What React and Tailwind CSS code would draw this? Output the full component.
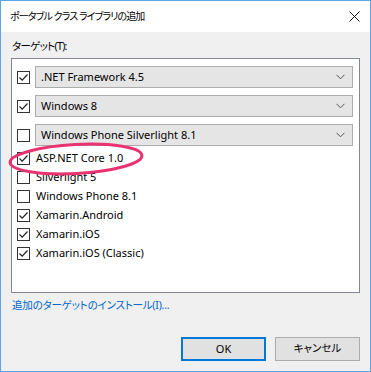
import React from 'react';

const font = { fontFamily: '"Noto Sans", "Noto Sans CJK JP", sans-serif' };

// small check box, checked or not
function Box({ checked }) {
    return (
        <div className="w-[13px] h-[13px] border border-[#333333] bg-white flex items-center justify-center shrink-0">
            {checked && (
                <svg width="11" height="11" viewBox="0 0 11 11">
                    <path d="M1.5 5.5 L4.2 8.2 L9.5 2.5" fill="none" stroke="#222" strokeWidth="1.2" />
                </svg>
            )}
        </div>
    );
}

function DropRow({ checked, label }) {
    return (
        <div className="flex items-center h-[22px] mb-[7px]">
            <div className="ml-[5px] mr-[5px]"><Box checked={checked} /></div>
            <div className="flex-1 h-[22px] mr-[6px] bg-[#e5e5e5] border border-[#acacac] flex items-center justify-between pl-[5px] pr-[7px] text-[11px] text-black">
                <span>{label}</span>
                <svg width="9" height="6" viewBox="0 0 9 6">
                    <path d="M0.5 0.8 L4.5 4.8 L8.5 0.8" fill="none" stroke="#555" strokeWidth="1" />
                </svg>
            </div>
        </div>
    );
}

function CheckRow({ checked, label }) {
    return (
        <div className="flex items-center h-[19px]">
            <div className="ml-[5px] mr-[6px]"><Box checked={checked} /></div>
            <span className="text-[11px] text-black">{label}</span>
        </div>
    );
}

function App() {
    return (
        <div style={font} className="relative w-[371px] h-[372px] border border-[#5aa6e8] bg-[#f0f0f0] flex flex-col overflow-hidden [font-feature-settings:'palt']">
            {/* title bar */}
            <div className="h-[31px] bg-white flex items-center justify-between pl-[9px] pr-[10px] shrink-0">
                <span className="text-[10px] tracking-[-0.9px] text-black">ポータブル クラス ライブラリの追加</span>
                <svg width="11" height="11" viewBox="0 0 11 11">
                    <path d="M0.5 0.5 L10.5 10.5 M10.5 0.5 L0.5 10.5" stroke="#111" strokeWidth="1" />
                </svg>
            </div>

            <div className="flex flex-col px-[10px] pt-[6px]">
                <span className="text-[10.5px] tracking-[-0.7px] text-black leading-[16px] pl-px">ターゲット(T):</span>
                <div className="mt-[4px] h-[235px] border border-[#828790] bg-white pt-[7px] flex flex-col">
                    <DropRow checked label=".NET Framework 4.5" />
                    <DropRow checked label="Windows 8" />
                    <DropRow checked={false} label="Windows Phone Silverlight 8.1" />
                    <div className="-mt-[4px]">
                        <CheckRow checked label="ASP.NET Core 1.0" />
                        <CheckRow checked={false} label="Silverlight 5" />
                        <CheckRow checked={false} label="Windows Phone 8.1" />
                        <CheckRow checked label="Xamarin.Android" />
                        <CheckRow checked label="Xamarin.iOS" />
                        <CheckRow checked label="Xamarin.iOS (Classic)" />
                    </div>
                </div>
                <span className="mt-[4px] pl-px text-[10.5px] tracking-[-0.2px] leading-[16px] text-[#0066cc]">追加のターゲットのインストール(I)...</span>
                <div className="flex justify-end gap-[9px] mt-[24px]">
                    <button className="w-[85px] h-[24px] bg-[#e1e1e1] border-2 border-[#0078d7] text-[11px] text-black">OK</button>
                    <button className="w-[85px] h-[24px] bg-[#e1e1e1] border border-[#adadad] text-[10.5px] text-black">キャンセル</button>
                </div>
            </div>

            {/* red highlight ellipse */}
            <svg className="absolute left-0 top-0 pointer-events-none" width="371" height="372">
                <ellipse cx="75" cy="158" rx="66" ry="14.5" transform="rotate(-3 75 158)" fill="none" stroke="#e8336f" strokeWidth="3" />
            </svg>
        </div>
    );
}

export default App;
